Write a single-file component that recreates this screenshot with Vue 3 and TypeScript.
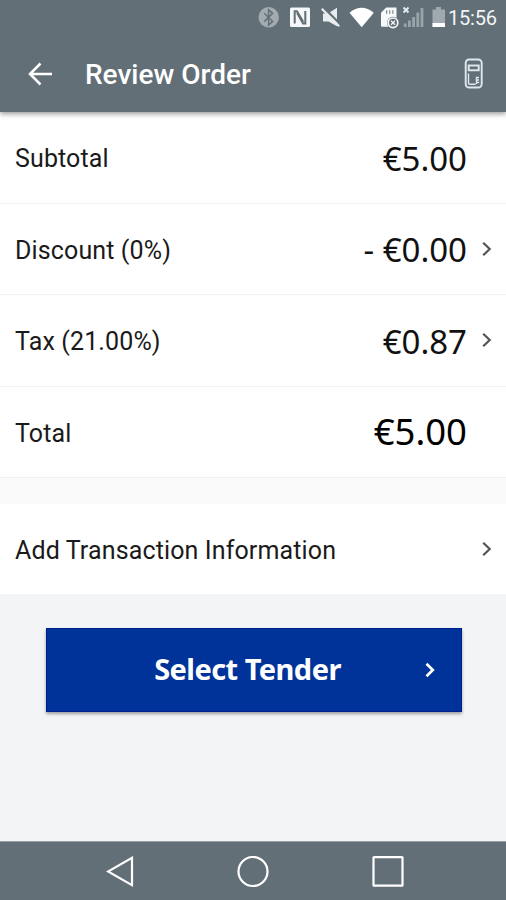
<script setup lang="ts">
interface Row {
  label: string
  amount: string
  link: boolean
  total?: boolean
}

const rows: Row[] = [
  { label: 'Subtotal', amount: '€5.00', link: false },
  { label: 'Discount (0%)', amount: '- €0.00', link: true },
  { label: 'Tax (21.00%)', amount: '€0.87', link: true },
  { label: 'Total', amount: '€5.00', link: false, total: true },
]
</script>

<template>
  <div class="screen">
    <div class="status">
      <svg class="status-icons" width="190" height="24" viewBox="258 6 190 24" aria-hidden="true">
        <circle cx="268.7" cy="17.3" r="10.2" fill="#a3abb0" />
        <path d="M264.3 13.2l8.3 8.2-4 3.6V9.8l4 3.6-8.3 8.2" fill="none" stroke="#626f77" stroke-width="1.5" />
        <rect x="290" y="7.5" width="20" height="19.5" rx="1.5" fill="#f5f7f8" />
        <path d="M294.7 23.5V11.2h2.3l6.2 10.5M305.3 11v12.4h-2.2l-6-10.4" fill="none" stroke="#626f77" stroke-width="2" />
        <path d="M323 13.5h5L337 7.8V26.2L328.500 21.500H323z" fill="#e9edef" />
        <path d="M322.500 6.500L341 25" stroke="#626f77" stroke-width="2.400" />
        <path d="M321.800 8.800L339.200 26.200" stroke="#e9edef" stroke-width="2.200" />
        <path d="M349.5 12.8Q361.5 2.8 373.8 12.8L361.7 27.3z" fill="#fff" />
        <path d="M386.2 7.5H396.5V26.8H382Q381 26.8 381 25.8V12.8z" fill="#f5f7f8" />
        <path d="M386.6 10.2v3.5M389.7 10.2v3.5M392.8 10.2v3.5" stroke="#7b878e" stroke-width="1.2" />
        <circle cx="393" cy="22.8" r="6" fill="#626f77" />
        <circle cx="393" cy="22.8" r="4.8" fill="none" stroke="#f5f7f8" stroke-width="1.7" />
        <path d="M391 20.8l4 4M395 20.8l-4 4" stroke="#f5f7f8" stroke-width="1.3" />
        <path d="M403.500 7.500l5 5M408.500 7.500l-5 5" stroke="#e9edef" stroke-width="1.800" />
        <path d="M405.2 23.5v3.5M409.4 20.5v6.5M413.6 17v10M417.8 12.5v14.5M422 8v19" stroke="#9aa4a9" stroke-width="2.8" />
        <path d="M436 7h5v2.5h4V27H432.500V9.500H436z" fill="#a0a9ae" />
        <rect x="432.500" y="23" width="12.500" height="4" fill="#fff" />
      </svg>
      <span class="clock">15:56</span>
    </div>

    <header class="bar">
      <svg class="back" width="24" height="24" viewBox="0 0 24 24" aria-hidden="true">
        <path d="M12.500 1.500L2 12l10.500 10.500M2 12h22" />
      </svg>
      <h1>Review Order</h1>
      <svg class="device" width="20" height="32" viewBox="0 0 20 32" aria-hidden="true">
        <rect x="1.700" y="1.500" width="16" height="28" rx="3.500" />
        <rect x="4.700" y="7.500" width="10" height="4.800" />
        <path d="M4.500 15.500v9.500q0 1.200 1.200 1.200h6" class="thin" />
        <path d="M15 19.500h-2.500v2.500h2.500M12.500 22v4M15.200 24.500h-2" class="thin" />
      </svg>
    </header>

    <main>
      <div v-for="row in rows" :key="row.label" class="row" :class="{ total: row.total }">
        <span class="label">{{ row.label }}</span>
        <span class="amount">{{ row.amount }}</span>
        <span class="arrow">
          <svg v-if="row.link" width="10" height="16" viewBox="0 0 10 16"><path d="M1.200 1.700L7.700 8l-6.500 6.300" /></svg>
        </span>
      </div>
      <div class="gap"></div>
      <div class="row info">
        <span class="label">Add Transaction Information</span>
        <span class="arrow">
          <svg width="10" height="16" viewBox="0 0 10 16"><path d="M1.200 1.700L7.700 8l-6.500 6.300" /></svg>
        </span>
      </div>
      <button class="tender" type="button">
        <span>Select Tender</span>
        <svg width="10" height="16" viewBox="0 0 10 16"><path d="M1.500 1.700L7.800 8l-6.300 6.300" /></svg>
      </button>
    </main>

    <nav class="nav">
      <svg width="28" height="32" viewBox="0 0 28 32"><path d="M26 1.800V29.200L2 15.500z" /></svg>
      <svg width="32" height="32" viewBox="0 0 32 32"><circle cx="16" cy="15.500" r="14.500" /></svg>
      <svg width="32" height="32" viewBox="0 0 32 32"><rect x="1.500" y="1.200" width="29" height="28.500" rx=".5" /></svg>
    </nav>
  </div>
</template>

<style>
body {
  margin: 0;
}
</style>

<style scoped>
.screen {
  display: flex;
  flex-direction: column;
  width: 506px;
  height: 900px;
  overflow: hidden;
  background: #f2f4f6;
  font-family: Roboto, 'Noto Sans', sans-serif;
}
.status {
  position: relative;
  z-index: 2;
  box-sizing: border-box;
  flex: none;
  display: flex;
  align-items: flex-start;
  height: 36px;
  padding: 6px 0 0 258px;
  background: #626f77;
}
.status-icons {
  flex: none;
}
.clock {
  color: #f2f5f6;
  font-size: 20px;
  line-height: 24px;
  letter-spacing: -0.2px;
}
.bar {
  position: relative;
  z-index: 1;
  box-sizing: border-box;
  flex: none;
  display: flex;
  align-items: center;
  height: 76px;
  padding: 0 22px 0 28px;
  background: #626f77;
  box-shadow: 0 2px 5px rgba(0, 0, 0, 0.4);
}
.back path {
  fill: none;
  stroke: #fff;
  stroke-width: 2.500;
}
h1 {
  flex: 1;
  margin: 0 0 0 33px;
  padding-top: 2px;
  color: #fff;
  font-size: 28px;
  font-weight: 500;
  line-height: 32px;
}
.device rect,
.device path {
  fill: none;
  stroke: #dfe8ec;
  stroke-width: 1.900;
}
.device .thin {
  stroke-width: 1.400;
}
main {
  flex: 1;
  display: flex;
  flex-direction: column;
}
.row {
  box-sizing: border-box;
  display: flex;
  align-items: center;
  height: 91.500px;
  padding: 0 14px 0 15px;
  border-bottom: 1.500px solid #f1f1f2;
  background: #fff;
}
.label {
  flex: 1;
  padding-top: 4px;
  color: #1a1a1a;
  font-size: 25px;
  line-height: 30px;
  letter-spacing: 0.13px;
}
.amount {
  padding-top: 3px;
  color: #111;
  font-family: 'Noto Sans', sans-serif;
  font-size: 33px;
  line-height: 44px;
}
.total .amount {
  padding: 0 0 1px;
  color: #000;
  font-size: 36.500px;
}
.arrow {
  display: flex;
  justify-content: flex-end;
  width: 25px;
}
.arrow path {
  fill: none;
  stroke: #555;
  stroke-width: 2.200;
}
.gap {
  height: 26px;
  background: #f9f9fa;
}
.info {
  height: 90px;
  border: 0;
}
.tender {
  box-sizing: border-box;
  display: grid;
  grid-template-columns: 1fr auto 1fr;
  align-items: center;
  width: 416px;
  height: 84px;
  margin: 34px 0 0 45.500px;
  padding: 0 26px 0 14px;
  border: 1px solid #001f92;
  border-radius: 0;
  background: #003399;
  box-shadow: 0 2px 3px rgba(0, 0, 0, 0.35);
}
.tender span {
  grid-column: 2;
  padding-bottom: 2px;
  color: #fff;
  font-family: 'Noto Sans', sans-serif;
  font-size: 29px;
  font-weight: 700;
  line-height: 40px;
  letter-spacing: -0.55px;
}
.tender svg {
  justify-self: end;
}
.tender path {
  fill: none;
  stroke: #fff;
  stroke-width: 2.700;
}
.nav {
  box-sizing: border-box;
  flex: none;
  display: flex;
  justify-content: space-between;
  height: 59px;
  padding: 14px 102px 0 106px;
  border-top: 1.500px solid #9aa1a6;
  background: #626f77;
}
.nav svg * {
  fill: none;
  stroke: #fff;
  stroke-width: 2.200;
}
</style>
